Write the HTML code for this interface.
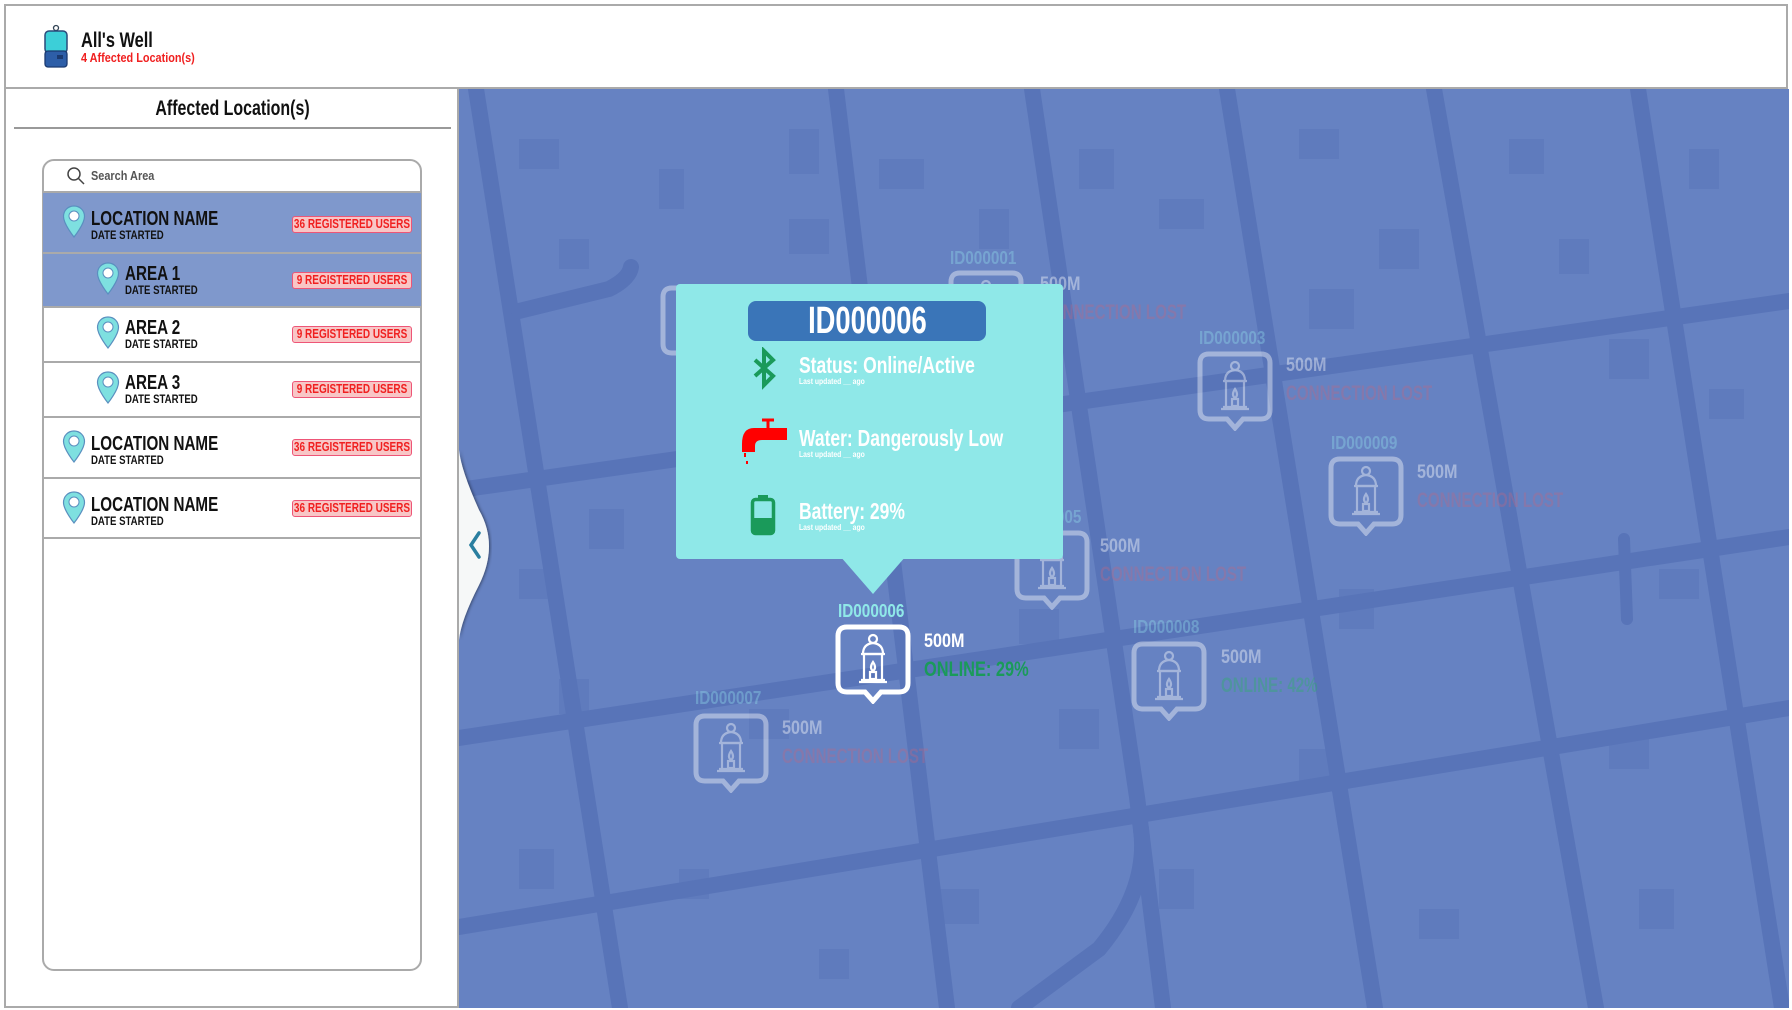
<!DOCTYPE html>
<html><head><meta charset="utf-8">
<style>
*{margin:0;padding:0;box-sizing:border-box}
body{width:1792px;height:1010px;overflow:hidden;background:#fff;font-family:"Liberation Sans",sans-serif;position:relative}
.abs{position:absolute}
.n{position:absolute;white-space:nowrap;font-weight:bold;transform-origin:0 50%}
.row{position:absolute;left:43px;width:378px;border-bottom:2px solid #aaa}
.hl{background:#7f98cc}
.nm{font-size:20px;color:#111;line-height:20px;transform:scaleX(.76)}
.ds{font-size:12px;color:#111;line-height:12px;transform:scaleX(.8)}
.bd{position:absolute;left:249px;width:120px;height:17px;background:#f8c6c6;border:1px solid #e57;border-radius:3px;overflow:hidden}
.bd span{position:absolute;left:50%;top:0;white-space:nowrap;color:#f02020;font-size:12.5px;font-weight:bold;line-height:15px;transform:translateX(-50%) scaleX(.8)}
.pin{position:absolute;width:24px;height:34px}
.lab{font-size:18px;color:#8fd8e8;transform:scaleX(.85)}
.t5{font-size:19px;color:#fff;transform:scaleX(.85)}
.cl{font-size:21px;color:#b56a8a;transform:scaleX(.72)}
.fade{opacity:.4}
</style></head><body>
<svg width="0" height="0" style="position:absolute">
<defs>
<symbol id="pin" viewBox="0 0 24 34"><path d="M12 1C6 1 1.5 5.5 1.5 11.5C1.5 19 12 32 12 32C12 32 22.5 19 22.5 11.5C22.5 5.5 18 1 12 1Z" fill="#7ee0e0" stroke="#5a8fbf" stroke-width="1.2"/><circle cx="12" cy="11" r="5" fill="#fff" stroke="#5a8fbf" stroke-width="1"/></symbol>
<symbol id="mk" viewBox="0 0 76 80"><path d="M12 3H64Q73 3 73 12V59Q73 68 64 68H46L38 77L30 68H12Q3 68 3 59V12Q3 3 12 3Z" fill="none" stroke="currentColor" stroke-width="5"/><g fill="none" stroke="currentColor" stroke-width="2.2"><circle cx="38" cy="15" r="4"/><path d="M28 30Q28 20 38 19Q48 20 48 30Z"/><path d="M26 30H50M29 30V56M47 30V56M24 58H52M26 56H50"/><path d="M38 38Q34 44 38 47Q42 44 38 38Z"/><rect x="35" y="48" width="6" height="7"/></g></symbol>
</defs></svg>

<!-- outer frame -->
<div class="abs" style="left:4px;top:4px;width:1784px;height:1004px;border:2px solid #aaa"></div>
<div class="abs" style="left:4px;top:87px;width:1784px;height:2px;background:#aaa"></div>

<!-- header logo -->
<svg class="abs" style="left:43px;top:24px" width="26" height="46" viewBox="0 0 26 44"><circle cx="13" cy="3" r="2.5" fill="none" stroke="#345" stroke-width="1.3"/><rect x="2" y="6" width="22" height="22" rx="4" fill="#3ccfd8" stroke="#2a4a7a" stroke-width="1.5"/><rect x="2" y="26" width="22" height="16" rx="3" fill="#2d5ea8" stroke="#1b3a70" stroke-width="1.3"/><rect x="14" y="30" width="6" height="4" fill="#1b3a70"/></svg>
<div class="n" style="left:81px;top:29px;font-size:21px;line-height:24px;color:#111;transform:scaleX(.78)">All's Well</div>
<div class="n" style="left:81px;top:51px;font-size:12.5px;line-height:14px;color:#f02020;transform:scaleX(.87)">4 Affected Location(s)</div>

<!-- sidebar -->
<div class="abs" style="left:457px;top:89px;width:2px;height:919px;background:#aaa"></div>
<div class="abs" style="left:14px;top:97px;width:437px;text-align:center;font-size:21px;line-height:24px;color:#111;font-weight:bold"><span style="display:inline-block;transform:scaleX(.76)">Affected Location(s)</span></div>
<div class="abs" style="left:14px;top:127px;width:437px;height:2px;background:#999"></div>

<div class="abs" style="left:42px;top:159px;width:380px;height:812px;border:2px solid #aaa;border-radius:12px"></div>
<svg class="abs" style="left:66px;top:166px" width="20" height="20" viewBox="0 0 20 20"><circle cx="8" cy="8" r="6" fill="none" stroke="#444" stroke-width="1.5"/><path d="M12.5 12.5L18 18" stroke="#444" stroke-width="1.5"/></svg>
<div class="n" style="left:91px;top:169px;font-size:13px;line-height:14px;color:#555;transform:scaleX(.84)">Search Area</div>
<div class="abs" style="left:43px;top:191px;width:378px;height:2px;background:#aaa"></div>

<div class="row hl" style="top:193px;height:61px"><svg class="pin" style="left:19px;top:12px"><use href="#pin"/></svg><div class="n nm" style="left:48px;top:16px">LOCATION NAME</div><div class="n ds" style="left:48px;top:36px">DATE STARTED</div><div class="bd" style="top:23px"><span>36 REGISTERED USERS</span></div></div>
<div class="row hl" style="top:254px;height:54px"><svg class="pin" style="left:53px;top:8px"><use href="#pin"/></svg><div class="n nm" style="left:82px;top:10px">AREA 1</div><div class="n ds" style="left:82px;top:30px">DATE STARTED</div><div class="bd" style="top:18px"><span>9 REGISTERED USERS</span></div></div>
<div class="row" style="top:308px;height:55px"><svg class="pin" style="left:53px;top:8px"><use href="#pin"/></svg><div class="n nm" style="left:82px;top:10px">AREA 2</div><div class="n ds" style="left:82px;top:30px">DATE STARTED</div><div class="bd" style="top:18px"><span>9 REGISTERED USERS</span></div></div>
<div class="row" style="top:363px;height:55px"><svg class="pin" style="left:53px;top:8px"><use href="#pin"/></svg><div class="n nm" style="left:82px;top:10px">AREA 3</div><div class="n ds" style="left:82px;top:30px">DATE STARTED</div><div class="bd" style="top:18px"><span>9 REGISTERED USERS</span></div></div>
<div class="row" style="top:418px;height:61px"><svg class="pin" style="left:19px;top:12px"><use href="#pin"/></svg><div class="n nm" style="left:48px;top:16px">LOCATION NAME</div><div class="n ds" style="left:48px;top:36px">DATE STARTED</div><div class="bd" style="top:21px"><span>36 REGISTERED USERS</span></div></div>
<div class="row" style="top:479px;height:60px"><svg class="pin" style="left:19px;top:12px"><use href="#pin"/></svg><div class="n nm" style="left:48px;top:16px">LOCATION NAME</div><div class="n ds" style="left:48px;top:36px">DATE STARTED</div><div class="bd" style="top:21px"><span>36 REGISTERED USERS</span></div></div>

<!-- map -->
<svg class="abs" style="left:459px;top:89px" width="1330" height="919" viewBox="0 0 1330 919">
<rect width="1330" height="919" fill="#6682c2"/>
<g fill="#5f7bbd">
<rect x="60" y="50" width="40" height="30"/><rect x="200" y="80" width="25" height="40"/><rect x="330" y="40" width="30" height="45"/><rect x="420" y="70" width="45" height="30"/><rect x="620" y="60" width="35" height="40"/><rect x="840" y="40" width="40" height="30"/><rect x="1050" y="50" width="35" height="35"/><rect x="1230" y="60" width="30" height="40"/>
<rect x="100" y="150" width="30" height="30"/><rect x="330" y="130" width="40" height="35"/><rect x="520" y="120" width="30" height="40"/><rect x="700" y="110" width="45" height="30"/><rect x="920" y="140" width="40" height="40"/><rect x="1100" y="150" width="30" height="35"/>
<rect x="850" y="200" width="45" height="40"/><rect x="1150" y="250" width="40" height="40"/><rect x="1250" y="300" width="35" height="30"/><rect x="130" y="420" width="35" height="40"/><rect x="60" y="480" width="30" height="30"/>
<rect x="560" y="520" width="40" height="35"/><rect x="880" y="500" width="35" height="40"/><rect x="1200" y="480" width="40" height="30"/><rect x="100" y="590" width="30" height="35"/><rect x="290" y="620" width="40" height="30"/>
<rect x="600" y="620" width="40" height="40"/><rect x="840" y="660" width="35" height="35"/><rect x="1150" y="650" width="40" height="30"/><rect x="60" y="760" width="35" height="40"/><rect x="220" y="780" width="30" height="30"/>
<rect x="480" y="800" width="40" height="35"/><rect x="700" y="780" width="35" height="40"/><rect x="960" y="820" width="40" height="30"/><rect x="1180" y="800" width="35" height="40"/><rect x="360" y="860" width="30" height="30"/>
</g>
<g stroke="#5874b8" stroke-width="16" fill="none" stroke-linecap="round">
<path d="M17 0L161 919"/><path d="M377 0L488 919"/><path d="M573 0L678 708L704 919"/><path d="M768 0L916 919"/><path d="M975 0L1137 919"/><path d="M1179 0L1323 919"/>
<path d="M60 222L150 200Q170 190 172 178"/>
<path d="M0 401L1330 212"/><path d="M0 649L1330 448"/><path d="M0 838L1330 619"/>
<path d="M682 740Q690 800 640 860L560 919"/>
<path d="M1165 450L1168 530" stroke-width="12"/>
</g>
</svg>

<!-- side tab -->
<svg class="abs" style="left:459px;top:450px" width="42" height="190" viewBox="0 0 42 190"><defs><filter id="sh"><feDropShadow dx="1" dy="0" stdDeviation="1.5" flood-opacity=".5"/></filter></defs><path d="M0 0Q2 20 20 60Q40 95 20 135Q2 170 0 190Z" fill="#f6f8f8" filter="url(#sh)"/><path d="M20 83L12 95L20 107" stroke="#2a7fa0" stroke-width="3.5" fill="none" stroke-linecap="round"/></svg>

<!-- faded markers -->
<div class="fade">
<div class="n lab" style="left:950px;top:248px">ID000001</div>
<svg class="abs" style="left:948px;top:270px;color:#fff" width="76" height="80"><use href="#mk"/></svg>
<div class="n t5" style="left:1040px;top:274px">500M</div>
<div class="n cl" style="left:1040px;top:301px">CONNECTION LOST</div>
<svg class="abs" style="left:660px;top:285px;color:#fff" width="76" height="80"><use href="#mk"/></svg>

<div class="n lab" style="left:1199px;top:328px">ID000003</div>
<svg class="abs" style="left:1197px;top:351px;color:#fff" width="76" height="80"><use href="#mk"/></svg>
<div class="n t5" style="left:1286px;top:355px">500M</div>
<div class="n cl" style="left:1286px;top:382px">CONNECTION LOST</div>

<div class="n lab" style="left:1331px;top:433px">ID000009</div>
<svg class="abs" style="left:1328px;top:456px;color:#fff" width="76" height="80"><use href="#mk"/></svg>
<div class="n t5" style="left:1417px;top:462px">500M</div>
<div class="n cl" style="left:1417px;top:489px">CONNECTION LOST</div>

<div class="n lab" style="left:1015px;top:507px">ID000005</div>
<svg class="abs" style="left:1014px;top:530px;color:#fff" width="76" height="80"><use href="#mk"/></svg>
<div class="n t5" style="left:1100px;top:536px">500M</div>
<div class="n cl" style="left:1100px;top:563px">CONNECTION LOST</div>

<div class="n lab" style="left:1133px;top:617px">ID000008</div>
<svg class="abs" style="left:1131px;top:641px;color:#fff" width="76" height="80"><use href="#mk"/></svg>
<div class="n t5" style="left:1221px;top:647px">500M</div>
<div class="n cl" style="left:1221px;top:674px;color:#2fae6a">ONLINE: 42%</div>

<div class="n lab" style="left:695px;top:688px">ID000007</div>
<svg class="abs" style="left:693px;top:713px;color:#fff" width="76" height="80"><use href="#mk"/></svg>
<div class="n t5" style="left:782px;top:718px">500M</div>
<div class="n cl" style="left:782px;top:745px">CONNECTION LOST</div>
</div>

<!-- active marker -->
<div class="n lab" style="left:838px;top:601px;color:#8fe8e8">ID000006</div>
<svg class="abs" style="left:835px;top:624px;color:#fff" width="76" height="80"><use href="#mk"/></svg>
<div class="n t5" style="left:924px;top:631px">500M</div>
<div class="n cl" style="left:924px;top:658px;color:#1a9a5a;transform:scaleX(.78)">ONLINE: 29%</div>

<!-- popup -->
<svg class="abs" style="left:840px;top:556px" width="66" height="40"><path d="M0 0H66L33 38Z" fill="#8fe8e8"/></svg>
<div class="abs" style="left:676px;top:284px;width:387px;height:275px;background:#8fe8e8;border-radius:4px"></div>
<div class="abs" style="left:748px;top:301px;width:238px;height:40px;background:#3a75b8;border-radius:8px;color:#fff;font-size:38px;font-weight:bold;text-align:center;line-height:40px"><span style="display:inline-block;transform:scaleX(.72)">ID000006</span></div>

<svg class="abs" style="left:752px;top:347px" width="26" height="44" viewBox="0 0 26 44"><path d="M3 13L21 29L12 38V4L21 13L3 29" stroke="#1a9a5a" stroke-width="4" fill="none"/></svg>
<div class="n" style="left:799px;top:352px;font-size:23px;line-height:26px;color:#fff;transform:scaleX(.76)">Status: Online/Active</div>
<div class="n" style="left:799px;top:376px;font-size:8.5px;color:#fff;transform:scaleX(.8)">Last updated __ ago</div>

<svg class="abs" style="left:740px;top:418px" width="48" height="46" viewBox="0 0 48 46"><path d="M22 2H34M28 2V10" stroke="#f00" stroke-width="3"/><path d="M14 10H47V22H22Q15 22 15 28V34H2V26Q2 10 14 10Z" fill="#f00"/><rect x="4" y="35" width="2" height="4" fill="#f00"/><rect x="6" y="43" width="2" height="3" fill="#f00"/></svg>
<div class="n" style="left:799px;top:425px;font-size:23px;line-height:26px;color:#fff;transform:scaleX(.76)">Water: Dangerously Low</div>
<div class="n" style="left:799px;top:449px;font-size:8.5px;color:#fff;transform:scaleX(.8)">Last updated __ ago</div>

<svg class="abs" style="left:750px;top:494px" width="26" height="42" viewBox="0 0 26 42"><rect x="8" y="1" width="10" height="5" fill="#1a9a5a"/><rect x="2.5" y="5.5" width="21" height="34" rx="3" fill="none" stroke="#1a9a5a" stroke-width="3.5"/><rect x="4" y="24" width="18" height="14" fill="#1a9a5a"/></svg>
<div class="n" style="left:799px;top:498px;font-size:23px;line-height:26px;color:#fff;transform:scaleX(.76)">Battery: 29%</div>
<div class="n" style="left:799px;top:522px;font-size:8.5px;color:#fff;transform:scaleX(.8)">Last updated __ ago</div>
</body></html>
